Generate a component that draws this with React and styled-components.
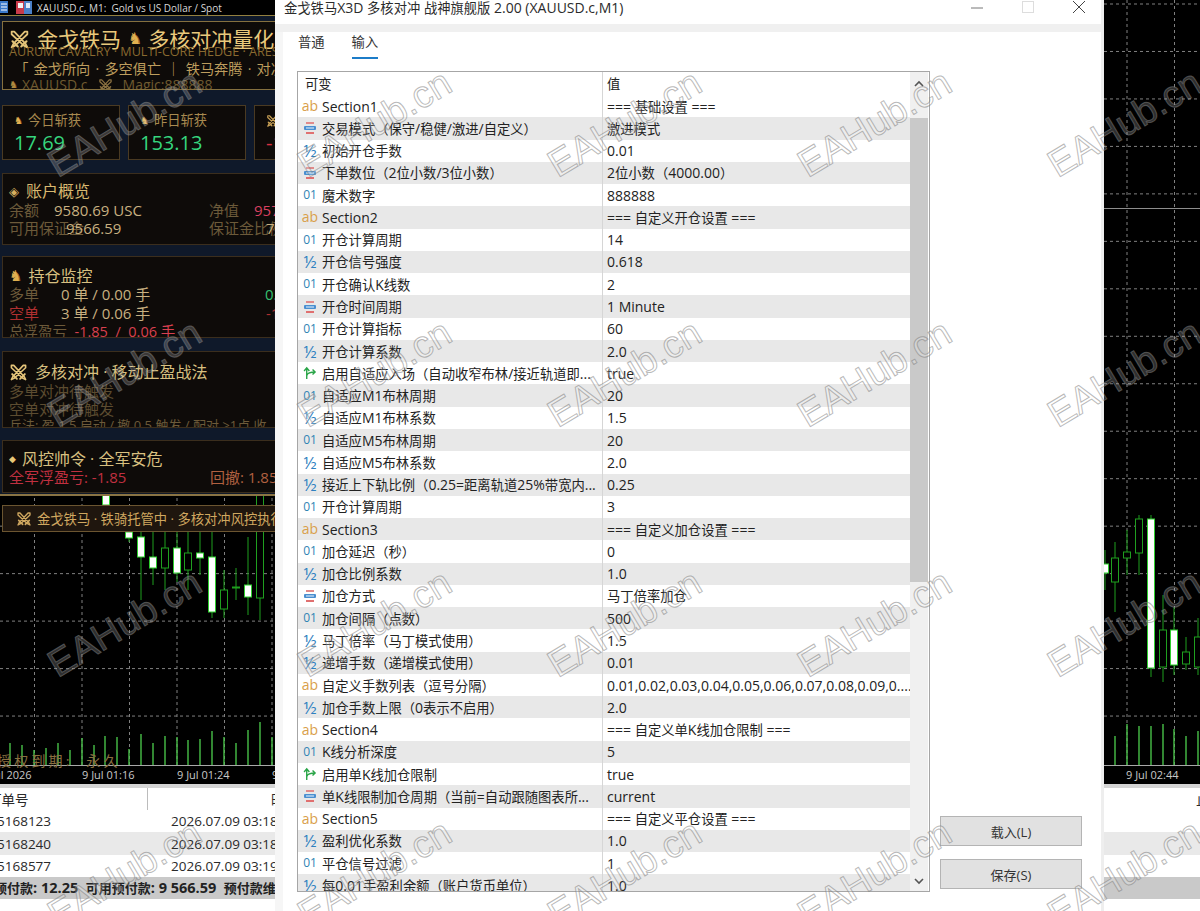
import React from 'react'
import styled, { createGlobalStyle } from 'styled-components'

const UI = '"Open Sans", "Noto Sans CJK SC", sans-serif'

const Global = createGlobalStyle`
  html, body { margin: 0; padding: 0; background: #000; }
  body { font-family: ${UI}; }
`

const Desktop = styled.div`
  position: relative;
  width: 1200px;
  height: 911px;
  overflow: hidden;
  background: #000;
`

/* ---------- terminal behind the dialog ---------- */

const Terminal = styled.div`
  display: flex;
  flex-direction: column;
  height: 911px;
`
const ChartArea = styled.div`
  position: relative;
  height: 784px;
  flex: none;
  background: #000;
  svg { display: block; }
`
const ChartOverlay = styled.div`
  position: absolute;
  top: 0;
  left: 0;
  width: 420px;
  display: flex;
  flex-direction: column;
`
const Strip = styled.div`
  display: flex;
  align-items: center;
  height: 15px;
  background: #000;
  border-bottom: 1px solid #93803f;
  color: #d8d8d8;
  font: 10px "Open Sans", sans-serif;
  white-space: pre;
  padding-left: 37px;
  position: relative;
`
const StripIcons = styled.svg`
  position: absolute;
  left: 0;
  top: 0;
`
const Panel = styled.div`
  background: #0f192a;
  padding: 5px 0 0 2px;
  height: 480px;
  box-sizing: border-box;
  border-bottom: 2px solid #8a7444;
  display: flex;
  flex-direction: column;
`
const Card = styled.section`
  box-sizing: border-box;
  height: ${p => p.$h}px;
  margin-top: ${p => p.$mt || 0}px;
  background: #0e0b09;
  border: 1px solid ${p => p.$gold ? '#85703f' : '#3b2e1d'};
  padding: ${p => p.$pt || 0}px 6px 0;
  overflow: hidden;
  flex: none;
`
const Line = styled.div`
  display: flex;
  align-items: center;
  height: ${p => p.$h}px;
  margin-top: ${p => p.$mt || 0}px;
  white-space: pre;
  word-spacing: ${p => p.$ws || 0}px;
  font-size: ${p => p.$size || 15}px;
  color: ${p => p.$color || '#6c5a3a'};
  line-height: 1;
`
const Horse = styled.span`
  font-family: "DejaVu Sans", sans-serif;
  font-size: ${p => p.$size || 14}px;
  color: ${p => p.$color || '#e0b050'};
  line-height: 1;
  margin-left: ${p => p.$before || 0}px;
  margin-right: ${p => p.$gap || 4}px;
`
const Gold = styled.span`
  color: ${p => p.$color || '#e9c97c'};
  margin-left: ${p => p.$ml || 0}px;
`
const FixedCell = styled.span`
  display: inline-block;
  width: ${p => p.$w}px;
  flex: none;
`
const Spacer = styled.span`
  display: inline-block;
  width: ${p => p.$w}px;
  flex: none;
`
const StatRow = styled.div`
  display: flex;
  gap: 8px;
  margin-top: 15px;
`
const Stat = styled.div`
  box-sizing: border-box;
  width: 118px;
  height: 55px;
  flex: none;
  background: #0e0b09;
  border: 1px solid #4a3a22;
  padding: 6px 0 0 11px;
`
const StatLabel = styled.div`
  display: flex;
  align-items: center;
  height: 18px;
  font-size: 13.3px;
  color: #a88a50;
  line-height: 1;
`
const StatValue = styled.div`
  font-size: 20px;
  height: 26px;
  line-height: 26px;
  color: ${p => p.$color};
`
const Banner = styled.div`
  display: flex;
  align-items: center;
  box-sizing: border-box;
  height: 27px;
  margin: 9px 0 0 2px;
  padding-left: 13px;
  background: #1f160e;
  border: 1px solid #6b5530;
  color: #d0a860;
  font-size: 13.3px;
  white-space: pre;
`
const License = styled.div`
  position: absolute;
  top: 750px;
  left: -3px;
  font: 14px "Liberation Serif", "Noto Sans CJK SC", serif;
  letter-spacing: 3.2px;
  white-space: pre;
  color: #8a7040;
`

const OrderTable = styled.div`
  flex: 1;
  border-top: 4px solid #d4d4d4;
  background: #fff;
  color: #2a2a2a;
  font-size: 13.5px;
`
const OrderHead = styled.div`
  display: grid;
  grid-template-columns: 148px 1048px 1fr;
  height: 22px;
  align-items: center;
  overflow: hidden;
  white-space: nowrap;
`
const OrderCell = styled.div`
  padding-left: ${p => p.$pl || 0}px;
  height: 100%;
  display: flex;
  align-items: center;
  white-space: nowrap;
  border-right: ${p => p.$line ? '1px solid #bcbcbc' : 'none'};
`
const Clipped = styled.span`
  margin-left: ${p => p.$ml}px;
`
const OrderRow = styled.div`
  display: grid;
  grid-template-columns: 148px 1fr;
  height: ${p => p.$h || 22}px;
  align-items: center;
  background: ${p => p.$alt ? '#e9e9e9' : '#fff'};
`
const Summary = styled.div`
  height: 22px;
  background: #c9c9c9;
  font-weight: 700;
  font-size: 13px;
  color: #222;
  white-space: pre;
  line-height: 22px;
  text-indent: -6px;
`

/* ---------- input dialog ---------- */

const Dialog = styled.div`
  position: absolute;
  left: 275px;
  top: 0;
  width: 829px;
  height: 911px;
  box-sizing: border-box;
  background: #fff;
  border-right: 3px solid #eeeeee;
  display: flex;
  flex-direction: column;
`
const TitleBar = styled.div`
  display: flex;
  align-items: center;
  height: 14px;
  flex: none;
  padding-left: 9px;
  padding-bottom: 10px;
  font-size: 13.3px;
  color: #2b2b2b;
  white-space: pre;
`
const WinControls = styled.div`
  margin-left: auto;
  display: flex;
  align-items: center;
  gap: 39px;
  padding-right: 16px;
`
const Band = styled.div`
  height: 8px;
  background: #f0f0f0;
  flex: none;
`
const Page = styled.div`
  flex: 1;
  border-left: 8px solid #f6f6f6;
  padding-left: 14px;
  display: flex;
  flex-direction: column;
`
const Tabs = styled.div`
  display: flex;
  gap: 27px;
  height: 39px;
  padding-left: 1px;
  flex: none;
`
const Tab = styled.div`
  box-sizing: border-box;
  height: 27px;
  padding-top: 2px;
  font-size: 13.3px;
  line-height: 17px;
  color: #333;
  border-bottom: ${p => p.$active ? '2.5px solid #1c7cc8' : 'none'};
`
const Content = styled.div`
  display: flex;
  align-items: stretch;
  height: 821px;
`
const Table = styled.div`
  box-sizing: border-box;
  width: 633px;
  height: 821px;
  border: 1px solid #a6a6a6;
  display: flex;
  overflow: hidden;
  flex: none;
`
const Rows = styled.div`
  width: 612px;
  flex: none;
  overflow: hidden;
`
const HeadRow = styled.div`
  display: grid;
  grid-template-columns: 305px 1fr;
  height: 23px;
  align-items: center;
  font-size: 13.3px;
  color: #222;
`
const Row = styled.div`
  display: grid;
  grid-template-columns: 305px 1fr;
  height: 22.28px;
  align-items: center;
  font-size: 13.3px;
  color: #222;
  background: ${p => p.$alt ? '#e8e8e8' : '#fff'};
`
const NameCell = styled.div`
  display: flex;
  align-items: center;
  height: 100%;
  padding-left: 5px;
  white-space: pre;
  overflow: hidden;
  border-right: 1px solid #d6d6d6;
`
const ValueCell = styled.div`
  padding-left: 4px;
  white-space: pre;
  overflow: hidden;
`
const HeadName = styled(NameCell)`
  padding-left: 7px;
`
const Latin = styled.span`
  font-size: ${p => p.$size || 14}px;
`
const TypeIcon = styled.span`
  display: flex;
  align-items: center;
  justify-content: center;
  width: 14px;
  height: 16px;
  margin-right: 5px;
  flex: none;
  font-size: ${p => p.$size}px;
  color: ${p => p.$color};
  line-height: 1;
`
const Scrollbar = styled.div`
  width: 18px;
  flex: none;
  background: #f0f0f0;
  display: flex;
  flex-direction: column;
  align-items: center;
`
const Arrow = styled.svg`
  flex: none;
  margin-top: ${p => p.$mt}px;
`
const Thumb = styled.div`
  width: 18px;
  height: 464px;
  background: #c9c9c9;
  margin-top: 30px;
  flex: none;
`
const Side = styled.div`
  margin-left: 10px;
  width: 142px;
  display: flex;
  flex-direction: column;
  justify-content: flex-end;
  gap: 13px;
  padding-bottom: 3px;
`
const Btn = styled.div`
  box-sizing: border-box;
  height: 30px;
  background: #e1e1e1;
  border: 1px solid #b4b4b4;
  display: flex;
  align-items: center;
  justify-content: center;
  font-size: 13px;
  color: #333;
`

const Watermarks = styled.div`
  position: absolute;
  left: 0;
  top: -2px;
  display: grid;
  grid-template-columns: repeat(5, 250px);
  grid-auto-rows: 250px;
  place-items: center;
  pointer-events: none;
`
const Mark = styled.div`
  font: 38px "Liberation Sans", sans-serif;
  white-space: nowrap;
  transform: rotate(-31deg);
  color: rgba(255, 255, 255, 0.2);
  -webkit-text-stroke: 1px rgba(125, 125, 125, 0.55);
`

/* Latin runs sit a little larger than the CJK around them, as in the terminal's UI font */
function Mixed({ text, size }) {
  return text.split(/([\x20-\x7e]+)/).map((part, i) =>
    i % 2 ? <Latin key={i} $size={size}>{part}</Latin> : part
  )
}

/* ---------- drawn icons ---------- */

function Swords({ size = 18, color = '#e4c47a' }) {
  const blades = 'M3 3 L6 3 L19 17 L21 21 L17 19 L3 6 Z M21 3 L18 3 L5 17 L3 21 L7 19 L21 6 Z'
  return (
    <svg width={size} height={size} viewBox="0 0 24 24" style={{ flex: 'none' }}>
      <path d={blades} fill="none" stroke={color} strokeWidth="2" strokeLinejoin="round" />
      <path d="M4 14 L10 20 M20 14 L14 20" stroke={color} strokeWidth="2.4" strokeLinecap="round" />
    </svg>
  )
}

function EnumIcon() {
  return (
    <svg width="14" height="14" viewBox="0 0 14 14">
      <rect x="3" y="1" width="8" height="2" fill="#e08a8a" />
      <rect x="1" y="5" width="12" height="4" rx="1" fill="#4a8fd0" />
      <rect x="3" y="6.4" width="8" height="1.2" fill="#cfe3f5" />
      <rect x="3" y="11" width="8" height="2" fill="#e07070" />
    </svg>
  )
}

function BoolIcon() {
  return (
    <svg width="16" height="16" viewBox="0 0 15 15" fill="none" stroke="#2aa548" strokeWidth="1.5">
      <path d="M4 14 L4 3 M1.2 5.4 L4 2 L6.8 5.4" />
      <path d="M4 10 C5 7.5 8 6.5 13 6.5 M10.2 3.8 L13 6.5 L10.2 9.2" />
    </svg>
  )
}

function TypeMark({ type }) {
  if (type === 'ab') return <TypeIcon $size={14} $color="#d9a04a">ab</TypeIcon>
  if (type === 'int') return <TypeIcon $size={12} $color="#2f84b4">01</TypeIcon>
  if (type === 'dbl') return <TypeIcon $size={17} $color="#2f80c0">½</TypeIcon>
  if (type === 'enum') return <TypeIcon><EnumIcon /></TypeIcon>
  return <TypeIcon><BoolIcon /></TypeIcon>
}

/* ---------- chart data ---------- */

const volumes = [
  [10, 743], [22, 745], [34, 750], [46, 748], [58, 743], [70, 750], [82, 738], [94, 745], [105, 736],
  [117, 737], [129, 749], [141, 734], [153, 743], [165, 736], [177, 737], [188, 740], [200, 739],
  [212, 731], [224, 737], [236, 743], [248, 730], [260, 722], [272, 737],
  [1115, 736], [1127, 724], [1139, 726], [1151, 726], [1163, 724], [1174, 729], [1186, 736], [1198, 731],
]

// x, wick top, wick bottom, body top, body bottom, filled
const candles = [
  [106, 490, 506, 490, 505, 1],
  [129, 525, 542, 532, 538, 1],
  [141, 525, 600, 537, 557, 1],
  [153, 525, 585, 557, 568, 1],
  [165, 525, 590, 548, 568, 0],
  [177, 525, 582, 548, 573, 1],
  [188, 525, 590, 553, 570, 0],
  [200, 525, 575, 553, 558, 1],
  [212, 525, 618, 557, 612, 1],
  [224, 570, 618, 590, 609, 0],
  [236, 568, 600, 587, 588, 0],
  [248, 537, 615, 585, 597, 1],
  [260, 525, 620, 490, 598, 0],
  [1105, 550, 590, 564, 573, 1],
  [1115, 542, 612, 558, 582, 0],
  [1127, 530, 575, 552, 558, 0],
  [1139, 515, 575, 519, 553, 0],
  [1151, 515, 677, 519, 668, 1],
  [1163, 595, 682, 630, 667, 0],
  [1174, 607, 675, 630, 665, 1],
  [1186, 637, 670, 652, 664, 0],
  [1198, 618, 675, 637, 667, 0],
]

function Chart() {
  const hLines = Array.from({ length: 16 }, (_, i) => 4 + i * 47.47)
  const vLines = Array.from({ length: 25 }, (_, i) => 34.5 + i * 47.5)
  return (
    <svg width="1200" height="784" viewBox="0 0 1200 784">
      {hLines.map(y => <line key={y} x1="0" x2="1200" y1={y} y2={y} stroke="#808080" strokeDasharray="3 3" />)}
      {vLines.map(x => <line key={x} x1={x} x2={x} y1="0" y2="765" stroke="#808080" strokeDasharray="3 3" />)}
      <line x1="0" x2="1200" y1="208.5" y2="208.5" stroke="#8d8d8d" />
      {volumes.map(([x, y]) => <line key={x} x1={x} x2={x} y1={y} y2="765" stroke="#48c048" strokeWidth="1.4" />)}
      {candles.map(([x, t, b, bt, bb, filled]) => (
        <g key={x}>
          <line x1={x} x2={x} y1={t} y2={b} stroke="#1f9f1f" />
          <rect x={x - 3.5} y={bt} width="7" height={bb - bt} fill={filled ? '#fff' : '#000'} stroke={filled ? '#2ecf2e' : '#1f9f1f'} />
        </g>
      ))}
      <line x1="0" x2="1200" y1="765.5" y2="765.5" stroke="#a8a8a8" />
      <g fill="#c8c8c8" fontFamily='"Open Sans", sans-serif' fontSize="11">
        <text x="-18" y="779">9 Jul 2026</text>
        <text x="82" y="779">9 Jul 01:16</text>
        <text x="177" y="779">9 Jul 01:24</text>
        <text x="272" y="779">9 Jul 01:32</text>
        <text x="1126" y="779">9 Jul 02:44</text>
      </g>
    </svg>
  )
}

/* ---------- dialog data ---------- */

const inputs = [
  ['ab', 'Section1', '=== 基础设置 ==='],
  ['enum', '交易模式（保守/稳健/激进/自定义）', '激进模式'],
  ['dbl', '初始开仓手数', '0.01'],
  ['enum', '下单数位（2位小数/3位小数）', '2位小数（4000.00）'],
  ['int', '魔术数字', '888888'],
  ['ab', 'Section2', '=== 自定义开仓设置 ==='],
  ['int', '开仓计算周期', '14'],
  ['dbl', '开仓信号强度', '0.618'],
  ['int', '开仓确认K线数', '2'],
  ['enum', '开仓时间周期', '1 Minute'],
  ['int', '开仓计算指标', '60'],
  ['dbl', '开仓计算系数', '2.0'],
  ['bool', '启用自适应入场（自动收窄布林/接近轨道即...', 'true'],
  ['int', '自适应M1布林周期', '20'],
  ['dbl', '自适应M1布林系数', '1.5'],
  ['int', '自适应M5布林周期', '20'],
  ['dbl', '自适应M5布林系数', '2.0'],
  ['dbl', '接近上下轨比例（0.25=距离轨道25%带宽内...', '0.25'],
  ['int', '开仓计算周期', '3'],
  ['ab', 'Section3', '=== 自定义加仓设置 ==='],
  ['int', '加仓延迟（秒）', '0'],
  ['dbl', '加仓比例系数', '1.0'],
  ['enum', '加仓方式', '马丁倍率加仓'],
  ['int', '加仓间隔（点数）', '500'],
  ['dbl', '马丁倍率（马丁模式使用）', '1.5'],
  ['dbl', '递增手数（递增模式使用）', '0.01'],
  ['ab', '自定义手数列表（逗号分隔）', '0.01,0.02,0.03,0.04,0.05,0.06,0.07,0.08,0.09,0....'],
  ['dbl', '加仓手数上限（0表示不启用）', '2.0'],
  ['ab', 'Section4', '=== 自定义单K线加仓限制 ==='],
  ['int', 'K线分析深度', '5'],
  ['bool', '启用单K线加仓限制', 'true'],
  ['enum', '单K线限制加仓周期（当前=自动跟随图表所...', 'current'],
  ['ab', 'Section5', '=== 自定义平仓设置 ==='],
  ['dbl', '盈利优化系数', '1.0'],
  ['int', '平仓信号过滤', '1'],
  ['dbl', '每0.01手盈利余额（账户货币单位）', '1.0'],
]

const orders = [
  ['5168123', '2026.07.09 03:18:06'],
  ['5168240', '2026.07.09 03:18:42'],
  ['5168577', '2026.07.09 03:19:15'],
]

function EaPanel() {
  return (
    <Panel>
      <Card $h={69} $gold>
        <Line $h={34} $size={21}>
          <Swords size={21} />
          <Gold $ml={7}>金戈铁马</Gold>
          <Horse $size={16} $before={7} $gap={6}>♞</Horse>
          <Gold>多核对冲量化</Gold>
        </Line>
        <Line $h={16} $mt={-12} $size={12.6} $color="#8a6a30">AURUM CAVALRY · MULTI-CORE HEDGE · ARES</Line>
        <Line $h={18} $size={14.2} $ws={1.5} $color="#bd9d5d">{' 「 金戈所向 · 多空俱亡 ｜ 铁马奔腾 · 对决'}</Line>
        <Line $h={14} $size={14} $color="#6f5a30">
          <Horse $size={10} $color="#b08a40">♞</Horse>
          XAUUSD.c
          <Spacer $w={10} />
          <Swords size={15} color="#8a7040" />
          <Spacer $w={10} />
          Magic:888888
        </Line>
      </Card>
      <StatRow>
        <Stat>
          <StatLabel><Horse $size={10} $gap={5}>♞</Horse>今日斩获</StatLabel>
          <StatValue $color="#36d67e">17.69</StatValue>
        </Stat>
        <Stat>
          <StatLabel><Horse $size={10} $gap={5}>♞</Horse>昨日斩获</StatLabel>
          <StatValue $color="#36d67e">153.13</StatValue>
        </Stat>
        <Stat>
          <StatLabel><Swords size={14} color="#c8a055" /><Spacer $w={5} />本周斩获</StatLabel>
          <StatValue $color="#d83040">-12.34</StatValue>
        </Stat>
      </StatRow>
      <Card $h={72} $mt={13} $pt={7}>
        <Line $h={20} $size={16} $color="#d8b870"><Horse $size={13} $gap={7} $color="#d8b060">◈</Horse>账户概览</Line>
        <Line $h={18}>
          <FixedCell $w={45}>余额</FixedCell><FixedCell $w={155}><Gold $color="#c8b080">9580.69 USC</Gold></FixedCell>
          <FixedCell $w={45}>净值</FixedCell><Gold $color="#d84060">9578.84</Gold>
        </Line>
        <Line $h={19}>
          <FixedCell $w={57}>可用保证金</FixedCell><FixedCell $w={143}><Gold $color="#c8b080">9566.59</Gold></FixedCell>
          <FixedCell $w={57}>保证金比例</FixedCell><Gold $color="#c8b080">78000%</Gold>
        </Line>
      </Card>
      <Card $h={82} $mt={11} $pt={9}>
        <Line $h={20} $size={16} $color="#d8c080"><Horse $size={15} $gap={6}>♞</Horse>持仓监控</Line>
        <Line $h={17}>
          <FixedCell $w={52}>多单</FixedCell><FixedCell $w={204}><Gold $color="#c8b080">0 单 / 0.00 手</Gold></FixedCell><Gold $color="#36c070">0.00</Gold>
        </Line>
        <Line $h={20} $color="#b03030">
          <FixedCell $w={52}>空单</FixedCell><FixedCell $w={205}><Gold $color="#c8b080">3 单 / 0.06 手</Gold></FixedCell><Gold $color="#b03030">-1.85</Gold>
        </Line>
        <Line $h={19} $size={14.5}>总浮盈亏  <Gold $color="#d84050">-1.85  /  0.06 手</Gold></Line>
      </Card>
      <Card $h={77} $mt={13} $pt={10}>
        <Line $h={20} $size={16} $color="#d8c080"><Swords size={19} /><Gold $ml={7} $color="#d8c080">多核对冲 · 移动止盈战法</Gold></Line>
        <Line $h={18} $color="#5c4c30">多单对冲待触发</Line>
        <Line $h={18} $color="#5c4c30">空单对冲待触发</Line>
        <Line $h={15} $size={13}>兵法: 盈 1.5 启动 / 撤 0.5 触发 / 配对 ≥1点 收</Line>
      </Card>
      <Card $h={53} $mt={12} $pt={8}>
        <Line $h={20} $size={16} $color="#d8c080"><Horse $size={9} $gap={6} $color="#e8c878">◆</Horse>风控帅令 · 全军安危</Line>
        <Line $h={16}>
          <FixedCell $w={201}><Gold $color="#c03040">全军浮盈亏: -1.85</Gold></FixedCell>
          <Gold $color="#b06040">回撤: 1.85</Gold>
        </Line>
      </Card>
    </Panel>
  )
}

export default function App() {
  return (
    <Desktop>
      <Global />
      <Terminal>
        <ChartArea>
          <Chart />
          <ChartOverlay>
            <Strip>
              <StripIcons width="34" height="15" viewBox="0 0 34 15">
                <rect x="0" y="1" width="8" height="12" fill="#3a78c8" />
                <path d="M1 4h6M1 7h6M1 10h6" stroke="#fff" />
                <rect x="16" y="1" width="8" height="13" fill="#c83a4a" />
                <rect x="24" y="1" width="8" height="13" fill="#4a80c8" />
                <rect x="18" y="3" width="5" height="5" fill="#f4f4f4" />
                <rect x="26" y="3" width="4" height="5" fill="#dfe9f7" />
              </StripIcons>
              XAUUSD.c, M1:  Gold vs US Dollar / Spot
            </Strip>
            <EaPanel />
            <Banner>
              <Swords size={16} color="#d0a860" />
              <Spacer $w={5} />
              金戈铁马 · 铁骑托管中 · 多核对冲风控执行
            </Banner>
          </ChartOverlay>
          <License>授权到期:  永久</License>
        </ChartArea>
        <OrderTable>
          <OrderHead>
            <OrderCell $line><Clipped $ml={-12}>订单号</Clipped></OrderCell>
            <OrderCell $pl={123}>时间</OrderCell>
            <OrderCell>止损</OrderCell>
          </OrderHead>
          {orders.map((o, i) => (
            <OrderRow key={o[0]} $alt={i === 1} $h={i === 1 ? 23 : 22}>
              <OrderCell><Clipped $ml={-3}>{o[0]}</Clipped></OrderCell>
              <OrderCell $pl={23}>{o[1]}</OrderCell>
            </OrderRow>
          ))}
          <Summary><Mixed size={14.5} text="预付款: 12.25  可用预付款: 9 566.59  预付款维持率: 78 000.00%" /></Summary>
        </OrderTable>
      </Terminal>

      <Dialog>
        <TitleBar>
          <span><Mixed size={14} text="金戈铁马X3D 多核对冲 战神旗舰版 2.00 (XAUUSD.c,M1)" /></span>
          <WinControls>
            <svg width="12" height="12" viewBox="0 0 12 12"><path d="M0 7h12" stroke="#777" /></svg>
            <svg width="12" height="12" viewBox="0 0 12 12"><rect x="0.5" y="0.5" width="11" height="11" fill="none" stroke="#ddd" /></svg>
            <svg width="12" height="12" viewBox="0 0 12 12"><path d="M0 0L12 12M12 0L0 12" stroke="#444" /></svg>
          </WinControls>
        </TitleBar>
        <Band />
        <Page>
          <Tabs>
            <Tab>普通</Tab>
            <Tab $active>输入</Tab>
          </Tabs>
          <Content>
            <Table>
              <Rows>
                <HeadRow>
                  <HeadName>可变</HeadName>
                  <ValueCell>值</ValueCell>
                </HeadRow>
                {inputs.map(([type, name, value], i) => (
                  <Row key={i} $alt={i % 2 === 1}>
                    <NameCell><TypeMark type={type} /><span><Mixed text={name} /></span></NameCell>
                    <ValueCell><Mixed text={value} /></ValueCell>
                  </Row>
                ))}
              </Rows>
              <Scrollbar>
                <Arrow $mt={8} width="12" height="8" viewBox="0 0 12 8"><path d="M2 6L6 2L10 6" fill="none" stroke="#555" strokeWidth="1.6" /></Arrow>
                <Thumb />
                <Arrow $mt={295} width="12" height="8" viewBox="0 0 12 8"><path d="M2 2L6 6L10 2" fill="none" stroke="#555" strokeWidth="1.6" /></Arrow>
              </Scrollbar>
            </Table>
            <Side>
              <Btn>载入(L)</Btn>
              <Btn>保存(S)</Btn>
            </Side>
          </Content>
        </Page>
      </Dialog>

      <Watermarks>
        {Array.from({ length: 20 }, (_, i) => <Mark key={i}>EAHub.cn</Mark>)}
      </Watermarks>
    </Desktop>
  )
}
